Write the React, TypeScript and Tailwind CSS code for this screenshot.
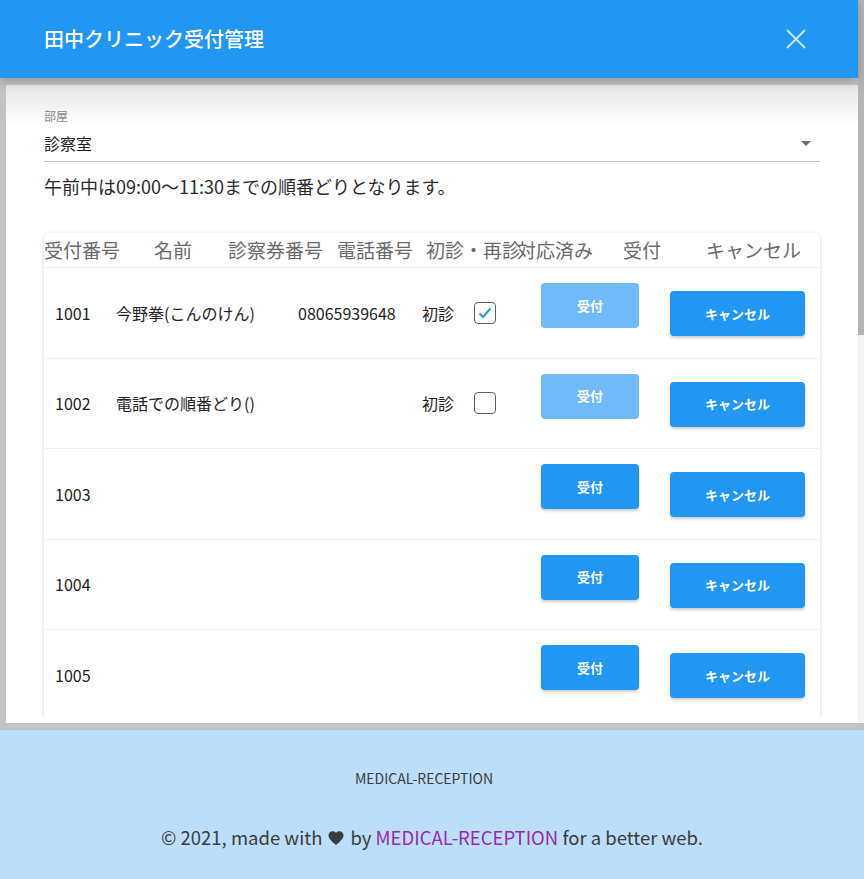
import React from "react";

type Row = {
  no: string;
  name?: string;
  phone?: string;
  kind?: string;
  done?: boolean;
  accepted?: boolean;
};

const rows: Row[] = [
  { no: "1001", name: "今野拳(こんのけん)", phone: "08065939648", kind: "初診", done: true, accepted: true },
  { no: "1002", name: "電話での順番どり()", kind: "初診", done: false, accepted: true },
  { no: "1003" },
  { no: "1004" },
  { no: "1005" },
];

const font = { fontFamily: '"Noto Sans CJK JP", "Noto Sans", sans-serif' };

const CheckBox = ({ checked }: { checked: boolean }) => (
  <div className="w-[22px] h-[22px] rounded-[4px] border border-[#5f5f5f] bg-white flex items-center justify-center">
    {checked && (
      <svg width="16" height="16" viewBox="0 0 16 16">
        <path d="M2.5 8.5 L6 12 L13.5 3.5" fill="none" stroke="#2196f3" strokeWidth="2" />
      </svg>
    )}
  </div>
);

const App = () => {
  return (
    <div className="w-[864px] min-h-[879px] flex flex-col" style={font}>
      {/* dialog over grey overlay */}
      <div className="h-[730px] bg-[#c3c3c3] flex">
        <div className="w-[858px] flex flex-col">
          <div className="relative z-10 h-[78px] bg-[#2196f3] shadow-[0_3px_10px_rgba(0,0,0,0.25)] flex items-center justify-between pl-[44px] pr-[51px]">
            <h1 className="text-white text-[20px] font-medium leading-none">田中クリニック受付管理</h1>
            <svg width="22" height="22" viewBox="0 0 22 22">
              <path d="M2 2 L20 20 M20 2 L2 20" stroke="rgba(255,255,255,0.75)" strokeWidth="2" />
            </svg>
          </div>
          <div className="ml-[6px] mt-[7px] w-[852px] h-[638px] bg-white overflow-hidden relative">
            <div className="absolute inset-x-0 top-0 h-[40px] bg-gradient-to-b from-[#e6e6e6] to-white" />
            <div className="relative h-[632px] overflow-hidden pl-[38px] pr-[36px] pt-[23px]">
              {/* select */}
              <div className="w-[776px] border-b border-[#c8c8c8] pb-[6px]">
                <div className="text-[12px] leading-[16px] text-[#8a8a8a]">部屋</div>
                <div className="mt-[7px] flex items-center justify-between">
                  <span className="text-[16px] leading-[24px] text-[#222]">診察室</span>
                  <svg width="24" height="24" viewBox="0 0 24 24" className="mr-[2px]">
                    <path d="M7 10l5 5 5-5z" fill="#6b6b6b" />
                  </svg>
                </div>
              </div>
              <p className="mt-[11px] text-[18px] leading-[26px] text-[#2a2a2a]">
                午前中は09:00〜11:30までの順番どりとなります。
              </p>

              {/* table */}
              <div className="mt-[34px] w-[776px] rounded-[6px] bg-white shadow-[0_1px_4px_rgba(0,0,0,0.18)]">
                <div className="h-[35px] flex items-center border-b border-[#eeeeee] text-[19px] text-[#6a6a6a] whitespace-nowrap">
                  <div className="w-[110px]">受付番号</div>
                  <div className="w-[74px]">名前</div>
                  <div className="w-[109px]">診察券番号</div>
                  <div className="w-[89px]">電話番号</div>
                  <div className="w-[91px]">初診・再診</div>
                  <div className="w-[106px]">対応済み</div>
                  <div className="w-[83px]">受付</div>
                  <div>キャンセル</div>
                </div>
                {rows.map((r) => (
                  <div
                    key={r.no}
                    className="h-[90.5px] flex pl-[11px] border-b border-[#f0f0f0] text-[16px] text-[#222] whitespace-nowrap"
                  >
                    <div className="w-[61px] self-center">{r.no}</div>
                    <div className="w-[182px] self-center">{r.name}</div>
                    <div className="w-[124px] self-center">{r.phone}</div>
                    <div className="w-[52px] self-center">{r.kind}</div>
                    <div className="w-[67px] self-center">
                      {r.kind && <CheckBox checked={!!r.done} />}
                    </div>
                    <div className="w-[129px]">
                      <button
                        className={`mt-[15px] w-[98px] h-[45px] rounded-[4px] text-white text-[13px] font-bold ${
                          r.accepted ? "bg-[#6fbaf7]" : "bg-[#2196f3] shadow-[0_2px_3px_rgba(0,0,0,0.2)]"
                        }`}
                      >
                        受付
                      </button>
                    </div>
                    <div>
                      <button className="mt-[23px] w-[135px] h-[45px] rounded-[4px] bg-[#2196f3] text-white text-[13px] font-bold shadow-[0_2px_3px_rgba(0,0,0,0.2)]">
                        キャンセル
                      </button>
                    </div>
                  </div>
                ))}
              </div>
            </div>
          </div>
        </div>
        {/* scrollbar */}
        <div className="w-[6px] flex flex-col">
          <div className="h-[335px] bg-[#b5b5b5]" />
          <div className="h-[388px] bg-[#f4f4f4]" />
        </div>
      </div>

      {/* footer */}
      <footer className="flex-1 h-[149px] bg-[#bbdefb] flex flex-col items-center text-[#3c3c3c]">
        <div className="mt-[39px] text-[14px] leading-[18px] ml-[-16px]">MEDICAL-RECEPTION</div>
        <div className="mt-[38px] text-[18.5px] leading-[24px] flex items-center">
          <span>© 2021, made with</span>
          <svg width="18" height="18" viewBox="0 0 24 24" className="mx-[5px] mt-[2px]">
            <path
              d="M12 21.35l-1.45-1.32C5.4 15.36 2 12.28 2 8.5 2 5.42 4.42 3 7.5 3c1.74 0 3.41.81 4.5 2.09C13.09 3.81 14.76 3 16.5 3 19.58 3 22 5.42 22 8.5c0 3.78-3.4 6.86-8.55 11.54L12 21.35z"
              fill="#3c3c3c"
            />
          </svg>
          <span>
            by <span className="text-[#9c27b0]">MEDICAL-RECEPTION</span> for a better web.
          </span>
        </div>
      </footer>
    </div>
  );
};

export default App;
